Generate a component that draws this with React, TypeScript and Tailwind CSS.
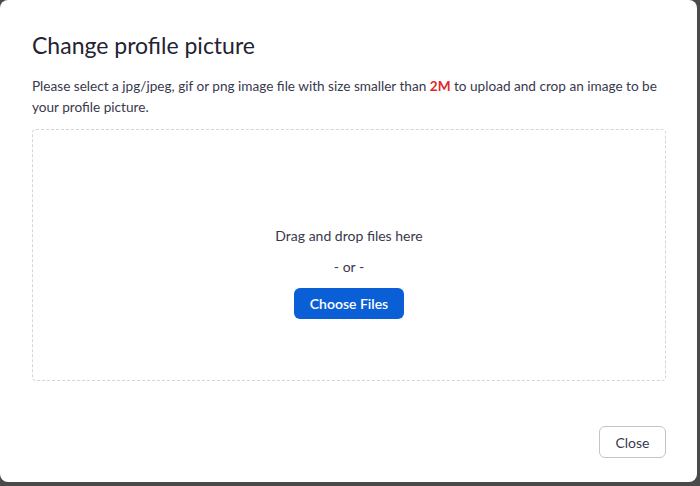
export default function App() {
  return (
    <div className="h-[486px] w-[700px] bg-[#4a4a4a] font-['Lato',sans-serif]">
      <div className="flex h-[482px] w-[697px] flex-col rounded-lg bg-white px-8 pt-[29px] pb-6">
        <h1 className="text-[23px] leading-8 text-[#232333]">Change profile picture</h1>
        <p className="mt-[15px] text-[13.6px] leading-[21px] text-[#39394d]">
          Please select a jpg/jpeg, gif or png image file with size smaller than{" "}
          <span className="font-bold text-[#e02828]">2M</span> to upload and crop an image to be your
          profile picture.
        </p>
        <div className="mt-[11px] flex h-[252px] w-[634px] flex-col items-center justify-center rounded border border-dashed border-[#d6d6d6] pt-[34px]">
          <p className="text-[14px] text-[#39394d]">Drag and drop files here</p>
          <p className="mt-[10px] text-[14px] text-[#39394d]">- or -</p>
          <button className="mt-[11px] h-[31px] w-[110px] rounded-md bg-[#0b5fd6] text-[14px] font-semibold text-white">
            Choose Files
          </button>
        </div>
        <div className="mt-auto flex w-[634px] justify-end">
          <button className="h-[32px] w-[67px] rounded-md border border-[#c4c4c4] bg-white text-[14px] text-[#39394d]">
            Close
          </button>
        </div>
      </div>
    </div>
  );
}
